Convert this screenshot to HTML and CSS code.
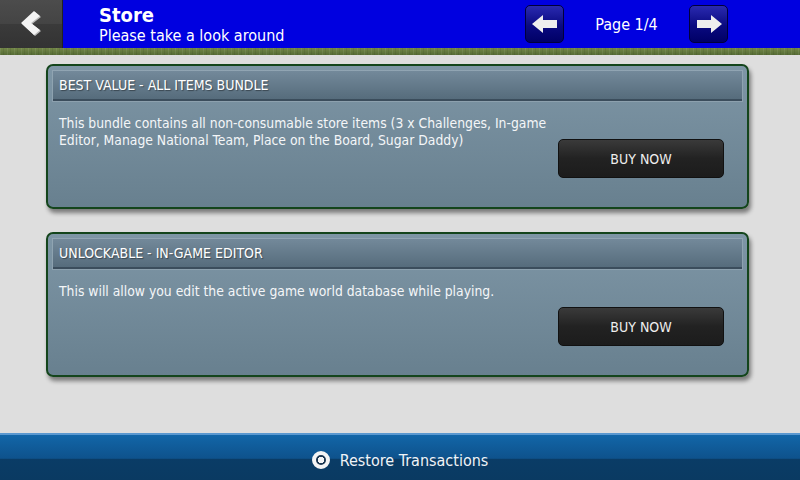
FILE: index.html
```html
<!DOCTYPE html>
<html lang="en">
<head>
  <meta charset="UTF-8" />
  <title>Store</title>
  <link rel="stylesheet" href="styles.css">
</head>
<body>

  <section class="header">
    <div class="back-button">
      <svg width="28" height="30" viewBox="0 0 28 30">
        <path d="M18 3 L24 8 L15 15 L24 22 L18 27 L5 15 Z" fill="#bbb"/>
        <path d="M17 2 L23 7 L14 14 L23 21 L17 26 L4 14 Z" fill="#f4f4f4"/>
      </svg>
    </div>
    <div class="title">
      <h1>Store</h1>
      <p>Please take a look around</p>
    </div>
    <div class="pager">
      <button class="page-button">
        <svg width="28" height="20" viewBox="0 0 28 20">
          <path d="M1 10 L12 1 L12 6 L26 6 L26 14 L12 14 L12 19 Z" fill="#eee"/>
        </svg>
      </button>
      <span class="page-label">Page 1/4</span>
      <button class="page-button">
        <svg width="28" height="20" viewBox="0 0 28 20">
          <path d="M27 10 L16 1 L16 6 L2 6 L2 14 L16 14 L16 19 Z" fill="#eee"/>
        </svg>
      </button>
    </div>
  </section>
  <div class="grass"></div>

  <section class="store-list">
    <div class="store-card">
      <div class="card-title">BEST VALUE - ALL ITEMS BUNDLE</div>
      <div class="card-body">
        <p>This bundle contains all non-consumable store items (3 x Challenges, In-game Editor, Manage National Team, Place on the Board, Sugar Daddy)</p>
        <button class="buy-button">BUY NOW</button>
      </div>
    </div>

    <div class="store-card">
      <div class="card-title">UNLOCKABLE - IN-GAME EDITOR</div>
      <div class="card-body">
        <p>This will allow you edit the active game world database while playing.</p>
        <button class="buy-button">BUY NOW</button>
      </div>
    </div>
  </section>

  <footer>
    <span class="restore-icon"></span>
    Restore Transactions
  </footer>

</body>
</html>
```
FILE: styles.css
```css
* {
  box-sizing: border-box;
  font-family: "DejaVu Sans Condensed", "DejaVu Sans", sans-serif;
}

body {
  margin: 0;
  width: 800px;
  height: 480px;
  background: #dedede;
  color: #fff;
  display: flex;
  flex-direction: column;
  overflow: hidden;
}

.header {
  height: 48px;
  background: #0000e0;
  display: flex;
  align-items: stretch;
}

.back-button {
  width: 63px;
  background: linear-gradient(#4c4c4c 0%, #444 50%, #3a3a3a 51%, #333 100%);
  border-right: 1px solid #222;
  display: flex;
  align-items: center;
  justify-content: center;
}

.title {
  margin-left: 36px;
  padding-top: 4px;
}

.title h1 {
  margin: 0;
  font-size: 20px;
  line-height: 22px;
  font-weight: bold;
}

.title p {
  margin: 0;
  font-size: 16px;
  line-height: 20px;
}

.pager {
  margin-left: auto;
  margin-right: 72px;
  display: flex;
  align-items: center;
}

.page-button {
  width: 39px;
  height: 38px;
  padding: 0;
  border: 1px solid #00003a;
  border-radius: 5px;
  background: linear-gradient(#2a2ab0, #0a0a80 55%, #000066);
  display: flex;
  align-items: center;
  justify-content: center;
}

.page-label {
  width: 125px;
  text-align: center;
  font-size: 16px;
}

/* grass strip under the header */
.grass {
  height: 7px;
  background:
    repeating-linear-gradient(90deg, rgba(255,255,255,0.08) 0 1px, transparent 1px 3px, rgba(0,0,0,0.08) 3px 4px, transparent 4px 7px),
    linear-gradient(#738748, #556b34);
}

.store-list {
  flex: 1;
  padding: 9px 51px 0 46px;
  display: flex;
  flex-direction: column;
  gap: 23px;
}

.store-card {
  height: 145px;
  border: 2px solid #14451c;
  border-radius: 7px;
  background: linear-gradient(#7e96a6, #68808f);
  box-shadow: 2px 4px 4px rgba(0, 0, 0, 0.45);
  padding: 5px 5px 0 5px;
  display: flex;
  flex-direction: column;
}

.card-title {
  height: 30px;
  flex-shrink: 0;
  padding-left: 6px;
  background: linear-gradient(#73899a, #566c7c);
  border-bottom: 2px solid #3b4d5c;
  box-shadow: 0 0 0 1px rgba(255, 255, 255, 0.15);
  font-size: 14px;
  line-height: 29px;
  text-shadow: 1px 1px 1px rgba(0, 0, 0, 0.4);
}

.card-body {
  flex: 1;
  display: flex;
  justify-content: space-between;
  align-items: flex-start;
  padding: 14px 18px 29px 6px;
}

.card-body p {
  margin: 0;
  width: 490px;
  font-size: 13.8px;
  line-height: 17px;
  color: #f4f6f8;
}

.buy-button {
  align-self: flex-end;
  width: 166px;
  height: 39px;
  border: 1px solid #111;
  border-radius: 5px;
  background: linear-gradient(#3a3a3a, #222 50%, #1c1c1c);
  color: #eee;
  font-size: 14px;
}

footer {
  height: 47px;
  border-top: 2px solid #5a98d0;
  background: linear-gradient(#1266a8 0%, #0e528c 52%, #0a3c66 53%, #0a3a62 100%);
  display: flex;
  align-items: center;
  justify-content: center;
  gap: 10px;
  padding-top: 5px;
  font-size: 16px;
  color: #f0f4f8;
}

.restore-icon {
  width: 18px;
  height: 18px;
  border-radius: 50%;
  border: 4px solid #f4f4f4;
  background: radial-gradient(#f4f4f4 0 3px, #1a3550 3.5px);
}
```
